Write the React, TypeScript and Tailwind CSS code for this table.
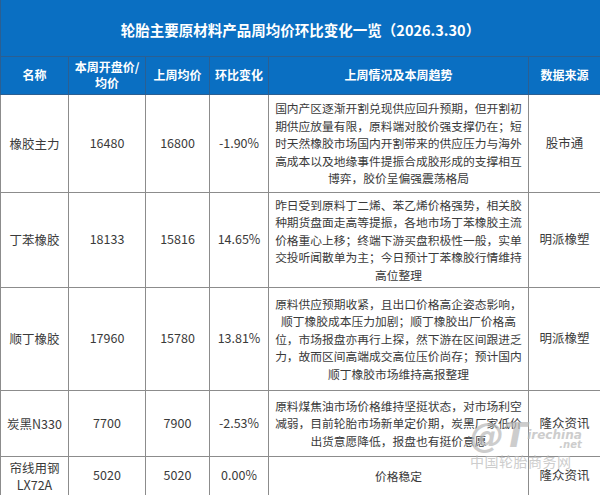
const ROWS = [
  {
    name: ['橡胶主力'],
    open: '16480',
    last: '16800',
    change: '-1.90%',
    h: 'h-[98px]',
    trend: [
      '国内产区逐渐开割兑现供应回升预期，但开割初',
      '期供应放量有限，原料端对胶价强支撑仍在；短',
      '时天然橡胶市场国内开割带来的供应压力与海外',
      '高成本以及地缘事件提振合成胶形成的支撑相互',
      '博弈，胶价呈偏强震荡格局',
    ],
    source: '股市通',
  },
  {
    name: ['丁苯橡胶'],
    open: '18133',
    last: '15816',
    change: '14.65%',
    h: 'h-[95px]',
    trend: [
      '昨日受到原料丁二烯、苯乙烯价格强势，相关胶',
      '种期货盘面走高等提振，各地市场丁苯橡胶主流',
      '价格重心上移；终端下游买盘积极性一般，实单',
      '交投听闻散单为主；今日预计丁苯橡胶行情维持',
      '高位整理',
    ],
    source: '明派橡塑',
  },
  {
    name: ['顺丁橡胶'],
    open: '17960',
    last: '15780',
    change: '13.81%',
    h: 'h-[103px]',
    trend: [
      '原料供应预期收紧，且出口价格高企姿态影响，',
      '顺丁橡胶成本压力加剧；顺丁橡胶出厂价格高',
      '位，市场报盘亦再行上探，然下游在区间跟进乏',
      '力，故而区间高端成交高位压价尚存；预计国内',
      '顺丁橡胶市场维持高报整理',
    ],
    source: '明派橡塑',
  },
  {
    name: ['炭黑N330'],
    open: '7700',
    last: '7900',
    change: '-2.53%',
    h: 'h-[66px]',
    trend: [
      '原料煤焦油市场价格维持坚挺状态，对市场利空',
      '减弱，目前轮胎市场新单定价期，炭黑厂家低价',
      '出货意愿降低，报盘也有挺价意愿',
    ],
    source: '隆众资讯',
  },
  {
    name: ['帘线用钢', 'LX72A'],
    open: '5020',
    last: '5020',
    change: '0.00%',
    h: 'h-[39px]',
    trend: ['价格稳定'],
    source: '隆众资讯',
  },
]

const FONT = "font-['Noto_Sans_CJK_SC','Noto_Sans',sans-serif]"

export default function App() {
  return (
    <div className={`relative w-[600px] h-[495px] overflow-hidden bg-white ${FONT}`}>
      <table className="w-[600px] table-fixed border-collapse">
        <colgroup>
          <col className="w-[68px]" />
          <col className="w-[77px]" />
          <col className="w-[64px]" />
          <col className="w-[59px]" />
          <col className="w-[260px]" />
          <col className="w-[72px]" />
        </colgroup>
        <thead>
          <tr className="h-[56px] bg-[#0a6fc2]">
            <th
              colSpan={6}
              className="border-x border-b border-[#2b5f92] pt-1 text-center text-[14.5px] font-bold text-white"
            >
              轮胎主要原材料产品周均价环比变化一览（2026.3.30）
            </th>
          </tr>
          <tr className="h-[38px] bg-[#0a6fc2] text-[12px] font-bold leading-[16px] text-white">
            <th className="border border-[#2b5f92]">名称</th>
            <th className="border border-[#2b5f92]">
              本周开盘价/
              <br />
              均价
            </th>
            <th className="border border-[#2b5f92]">上周均价</th>
            <th className="border border-[#2b5f92]">环比变化</th>
            <th className="border border-[#2b5f92]">上周情况及本周趋势</th>
            <th className="border border-[#2b5f92]">数据来源</th>
          </tr>
        </thead>
        <tbody className="text-[#3a3a3a]">
          {ROWS.map((r) => (
            <tr key={r.open + r.name[0]} className={r.h}>
              <td className="border border-[#8c8c8c] text-center text-[12.5px] leading-[17px]">
                {r.name.map((n) => (
                  <div key={n}>{n}</div>
                ))}
              </td>
              <td className="border border-[#8c8c8c] text-center text-[12.5px]">{r.open}</td>
              <td className="border border-[#8c8c8c] text-center text-[12.5px]">{r.last}</td>
              <td className="border border-[#8c8c8c] text-center text-[12.5px]">{r.change}</td>
              <td className="border border-[#8c8c8c] text-center text-[11.75px] leading-[17.6px] whitespace-nowrap">
                {r.trend.map((t) => (
                  <div key={t}>{t}</div>
                ))}
              </td>
              <td className="border border-[#8c8c8c] text-center text-[12.5px]">{r.source}</td>
            </tr>
          ))}
        </tbody>
      </table>

      {/* watermark */}
      <div className="pointer-events-none absolute left-[470px] top-[418px] w-[115px] text-[#b8b8b8] opacity-70">
        <div className="flex items-end">
          <span className="font-['DejaVu_Sans'] text-[34px] font-bold italic leading-[34px]">@T</span>
          <div className="mb-[2px] flex flex-col items-end leading-[10px]">
            <span className="font-['DejaVu_Sans'] text-[12px] font-bold italic">irechina</span>
            <span className="font-['DejaVu_Sans'] text-[10px] font-bold italic">.net</span>
          </div>
        </div>
        <div className="mt-[1px] text-[14px] leading-[16px] tracking-[0.5px]">中国轮胎商务网</div>
      </div>
    </div>
  )
}
